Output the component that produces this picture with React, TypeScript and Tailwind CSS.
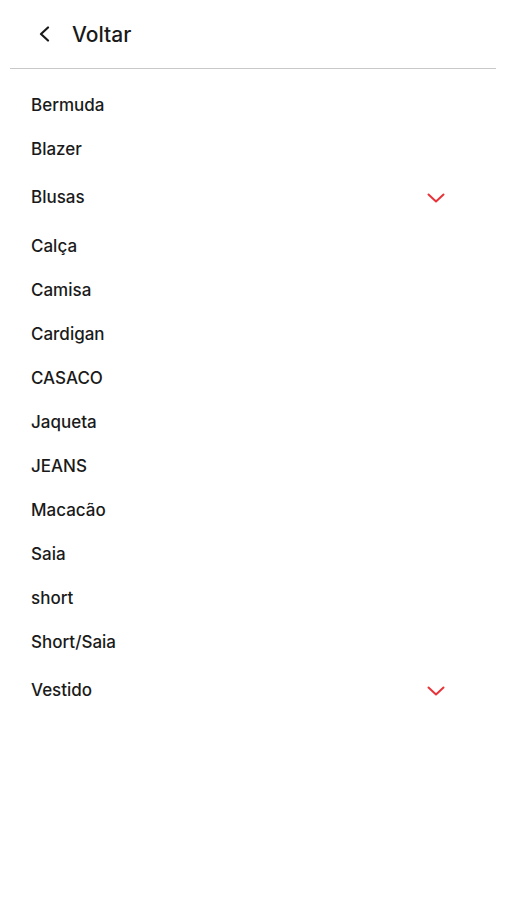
import React from "react";

const items: { label: string; expand?: boolean }[] = [
  { label: "Bermuda" },
  { label: "Blazer" },
  { label: "Blusas", expand: true },
  { label: "Calça" },
  { label: "Camisa" },
  { label: "Cardigan" },
  { label: "CASACO" },
  { label: "Jaqueta" },
  { label: "JEANS" },
  { label: "Macacão" },
  { label: "Saia" },
  { label: "short" },
  { label: "Short/Saia" },
  { label: "Vestido", expand: true },
];

export default function App() {
  return (
    <div
      className="w-[506px] h-[900px] bg-white text-[#1a1a1a]"
      style={{ fontFamily: 'Inter, "Liberation Sans", Arial, sans-serif' }}
    >
      <div className="h-[68px] flex items-center pl-[38px]">
        <svg width="12" height="16" viewBox="0 0 12 16" className="shrink-0">
          <polyline
            points="10,1.5 3,8 10,14.5"
            fill="none"
            stroke="#1a1a1a"
            strokeWidth="2.2"
            strokeLinecap="round"
            strokeLinejoin="round"
          />
        </svg>
        <span className="ml-[22px] text-[21px] font-medium leading-none">Voltar</span>
      </div>
      <div className="mx-[10px] h-px bg-[#c8c8c8]" />
      <div className="pt-[14px] pl-[31px] pr-[61px]">
        {items.map((it) => (
          <div
            key={it.label}
            className={`flex items-center justify-between ${it.expand ? "h-[53px]" : "h-[44px]"}`}
          >
            <span className="text-[17px] font-medium leading-none">{it.label}</span>
            {it.expand && (
              <svg width="18" height="10" viewBox="0 0 18 10">
                <polyline
                  points="1.5,1.5 9,8.5 16.5,1.5"
                  fill="none"
                  stroke="#e8333a"
                  strokeWidth="2"
                  strokeLinecap="round"
                  strokeLinejoin="round"
                />
              </svg>
            )}
          </div>
        ))}
      </div>
    </div>
  );
}
